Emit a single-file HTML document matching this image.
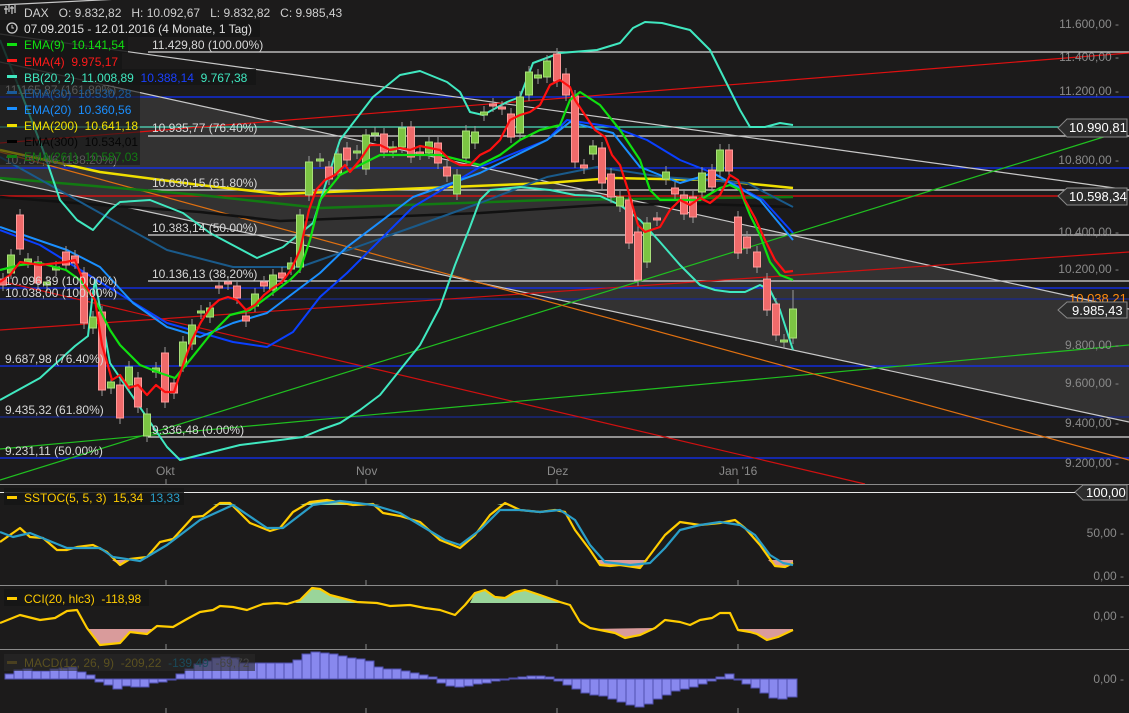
<!DOCTYPE html>
<html><head><meta charset="utf-8"><style>
html,body{margin:0;padding:0;background:#1c1b1b;}
svg{display:block;font-family:"Liberation Sans",sans-serif;}
text{white-space:pre;}
</style></head><body>
<svg width="1129" height="713" viewBox="0 0 1129 713" xmlns="http://www.w3.org/2000/svg">
<rect width="1129" height="713" fill="#1c1b1b"/>
<polygon points="0,62 1129,309 1129,422 0,180" fill="#333232"/>
<g stroke-width="1.2">
<line x1="148" y1="52" x2="1129" y2="52" stroke="#d8d8d8"/>
<line x1="0" y1="97" x2="1129" y2="97" stroke="#1030ff"/>
<line x1="0" y1="127" x2="1060" y2="127" stroke="#50e0c0"/>
<line x1="148" y1="136" x2="1129" y2="136" stroke="#d8d8d8"/>
<line x1="0" y1="168" x2="1129" y2="168" stroke="#1030ff"/>
<line x1="148" y1="190" x2="1129" y2="190" stroke="#d8d8d8"/>
<line x1="0" y1="196" x2="1060" y2="196" stroke="#ee1010"/>
<line x1="148" y1="235" x2="1129" y2="235" stroke="#d8d8d8"/>
<line x1="148" y1="281" x2="1129" y2="281" stroke="#d8d8d8"/>
<line x1="0" y1="288" x2="1129" y2="288" stroke="#1030ff"/>
<line x1="0" y1="299" x2="1129" y2="299" stroke="#1a2a90"/>
<line x1="0" y1="366" x2="1129" y2="366" stroke="#1030ff"/>
<line x1="0" y1="417" x2="1129" y2="417" stroke="#1a2a90"/>
<line x1="148" y1="437" x2="1129" y2="437" stroke="#d8d8d8"/>
<line x1="0" y1="458" x2="1129" y2="458" stroke="#1030ff"/>
</g>
<g stroke-width="1.2" fill="none">
<line x1="0" y1="34" x2="1129" y2="190" stroke="#c8c8c8"/>
<line x1="0" y1="5" x2="200" y2="-5" stroke="#c8c8c8"/>
<line x1="0" y1="62" x2="1129" y2="309" stroke="#c8c8c8"/>
<line x1="0" y1="180" x2="1129" y2="422" stroke="#c8c8c8"/>
<line x1="0" y1="143" x2="1129" y2="53" stroke="#e01010"/>
<line x1="0" y1="330" x2="1129" y2="252" stroke="#d01010"/>
<line x1="0" y1="281" x2="865" y2="484" stroke="#d01010"/>
<line x1="0" y1="480" x2="1110" y2="135" stroke="#20c020"/>
<line x1="0" y1="449" x2="1129" y2="345" stroke="#20c020"/>
<line x1="0" y1="152" x2="1129" y2="460" stroke="#e07010"/>
</g>
<g fill="none" stroke-linejoin="round">
<polyline stroke="#111" stroke-width="2.5" points="0,197 100,205 200,212 280,221 480,213 600,205 700,204 793,207"/>
<polyline stroke="#127a12" stroke-width="2.5" points="0,178 200,195 320,208 547,200 793,197"/>
<polyline stroke="#f0e000" stroke-width="2.5" points="0,150 100,172 200,185 280,194 547,183 613,178 713,180 793,188"/>
<polyline stroke="#1a5a8a" stroke-width="2" points="0,157 100,213 167,250 233,267 300,267 320,260 413,227 480,203 547,177 597,167 663,177 747,183 793,207"/>
<polyline stroke="#0a40ff" stroke-width="2" points="0,230 40,245 100,282 167,323 233,342 267,347 293,332 320,297 347,273 413,207 480,167 547,140 567,120 613,127 647,140 680,160 713,173 763,200 793,233"/>
<polyline stroke="#1a8fff" stroke-width="2" points="0,227 67,250 100,267 133,303 167,327 200,337 233,323 267,313 320,273 347,247 413,197 480,173 547,140 570,122 613,133 640,167 680,183 713,173 760,200 793,240"/>
<polyline stroke="#40e8c0" stroke-width="2" points="0,40 20,90 43,150 60,200 77,220 93,230 110,210 120,202 150,200 183,213 210,233 257,258 283,247 313,223 340,140 373,97 400,75 420,71 447,82 460,92 470,112 483,115 507,102 520,97 533,63 560,53 597,50 620,43 633,28 645,22 662,23 690,30 710,50 725,80 740,110 750,127 765,127 780,123 793,125"/>
<polyline stroke="#40e8c0" stroke-width="2" points="0,400 40,378 75,346 88,336 92,300 95,280 110,363 133,397 167,447 180,460 200,455 240,445 280,440 303,437 320,430 340,423 360,410 380,395 400,370 420,345 440,307 455,265 470,227 480,200 490,190 520,187 550,190 575,195 600,196 620,205 640,220 660,242 680,265 700,285 715,290 730,292 745,292 760,285 770,290 780,310 793,350"/>
</g>
<g stroke="#9a9a9a" stroke-width="1">
<path d="M3 273V291M11 249V279M20 209V255M28 253V268M38 256V289M47 276V291M56 261V276M66 246V271M75 250V269M84 267V329M93 311V334M102 306V396M111 376V394M120 379V424M129 361V391M138 372V413M147 408V442M156 362V378M165 347V408M174 377V399M183 336V372M192 319V350M201 305V319M210 302V323M219 280V294M228 276V290M237 280V304M246 310V327M255 288V312M264 276V292M273 269V296M282 267V284M291 257V275M300 209V273M309 156V201M320 153V167M329 161V185M338 148V179M347 142V166M357 145V159M366 129V175M375 127V141M384 128V158M393 141V158M402 122V153M411 121V163M420 146V160M429 136V159M438 137V169M447 161V182M457 169V200M466 125V164M475 126V149M484 106V121M493 98V112M502 101V115M511 108V143M520 91V139M529 66V101M538 69V84M547 55V83M557 48V87M566 68V101M575 90V168M584 159V174M593 140V160M602 142V189M611 168V203M620 191V212M629 194V249M638 226V286M647 217V268M657 212V226M666 166V185M675 182V200M684 189V220M693 191V223M702 167V198M712 164V193M720 144V177M729 144V177M738 211V259M747 231V254M757 246V273M767 273V316M776 298V341M784 334V348M793 290V344"/>
</g>
<g stroke-width="1">
<g fill="#7cc443" stroke="#a8e07a">
<rect x="7.5" y="255" width="7" height="18"/><rect x="24.5" y="259" width="7" height="3"/><rect x="43.5" y="282" width="7" height="3"/><rect x="52.5" y="267" width="7" height="3"/><rect x="89.5" y="317" width="7" height="11"/><rect x="107.5" y="382" width="7" height="6"/><rect x="125.5" y="367" width="7" height="18"/><rect x="143.5" y="414" width="7" height="22"/><rect x="152.5" y="368" width="7" height="4"/><rect x="179.5" y="342" width="7" height="24"/><rect x="188.5" y="325" width="7" height="19"/><rect x="197.5" y="311" width="7" height="2"/><rect x="206.5" y="308" width="7" height="9"/><rect x="251.5" y="294" width="7" height="12"/><rect x="269.5" y="275" width="7" height="15"/><rect x="287.5" y="263" width="7" height="6"/><rect x="296.5" y="215" width="7" height="52"/><rect x="305.5" y="162" width="7" height="33"/><rect x="316.5" y="159" width="7" height="2"/><rect x="334.5" y="154" width="7" height="19"/><rect x="353.5" y="151" width="7" height="2"/><rect x="362.5" y="135" width="7" height="34"/><rect x="371.5" y="133" width="7" height="2"/><rect x="389.5" y="147" width="7" height="5"/><rect x="398.5" y="128" width="7" height="19"/><rect x="425.5" y="142" width="7" height="11"/><rect x="453.5" y="175" width="7" height="19"/><rect x="462.5" y="131" width="7" height="27"/><rect x="471.5" y="132" width="7" height="11"/><rect x="480.5" y="112" width="7" height="3"/><rect x="516.5" y="97" width="7" height="36"/><rect x="525.5" y="72" width="7" height="23"/><rect x="534.5" y="75" width="7" height="3"/><rect x="543.5" y="61" width="7" height="16"/><rect x="589.5" y="146" width="7" height="8"/><rect x="616.5" y="197" width="7" height="9"/><rect x="643.5" y="223" width="7" height="39"/><rect x="662.5" y="172" width="7" height="7"/><rect x="698.5" y="173" width="7" height="19"/><rect x="716.5" y="150" width="7" height="21"/><rect x="780.5" y="340" width="7" height="2"/><rect x="789.5" y="309" width="7" height="29"/>
</g>
<g fill="#f06a6a" stroke="#ff9a9a">
<rect x="-0.5" y="279" width="7" height="6"/><rect x="16.5" y="215" width="7" height="34"/><rect x="34.5" y="262" width="7" height="21"/><rect x="62.5" y="252" width="7" height="13"/><rect x="71.5" y="256" width="7" height="7"/><rect x="80.5" y="273" width="7" height="50"/><rect x="98.5" y="312" width="7" height="78"/><rect x="116.5" y="385" width="7" height="33"/><rect x="134.5" y="378" width="7" height="29"/><rect x="161.5" y="353" width="7" height="49"/><rect x="170.5" y="383" width="7" height="10"/><rect x="215.5" y="286" width="7" height="2"/><rect x="224.5" y="282" width="7" height="2"/><rect x="233.5" y="286" width="7" height="12"/><rect x="242.5" y="316" width="7" height="5"/><rect x="260.5" y="282" width="7" height="4"/><rect x="278.5" y="273" width="7" height="5"/><rect x="325.5" y="167" width="7" height="12"/><rect x="343.5" y="148" width="7" height="12"/><rect x="380.5" y="134" width="7" height="18"/><rect x="407.5" y="127" width="7" height="30"/><rect x="416.5" y="152" width="7" height="2"/><rect x="434.5" y="143" width="7" height="20"/><rect x="443.5" y="167" width="7" height="9"/><rect x="489.5" y="104" width="7" height="2"/><rect x="498.5" y="107" width="7" height="2"/><rect x="507.5" y="114" width="7" height="23"/><rect x="553.5" y="54" width="7" height="27"/><rect x="562.5" y="74" width="7" height="21"/><rect x="571.5" y="96" width="7" height="66"/><rect x="580.5" y="165" width="7" height="3"/><rect x="598.5" y="148" width="7" height="35"/><rect x="607.5" y="174" width="7" height="23"/><rect x="625.5" y="200" width="7" height="43"/><rect x="634.5" y="232" width="7" height="48"/><rect x="653.5" y="218" width="7" height="2"/><rect x="671.5" y="188" width="7" height="6"/><rect x="680.5" y="195" width="7" height="19"/><rect x="689.5" y="197" width="7" height="20"/><rect x="708.5" y="170" width="7" height="17"/><rect x="725.5" y="150" width="7" height="21"/><rect x="734.5" y="217" width="7" height="36"/><rect x="743.5" y="237" width="7" height="11"/><rect x="753.5" y="252" width="7" height="15"/><rect x="763.5" y="279" width="7" height="31"/><rect x="772.5" y="304" width="7" height="31"/>
</g>
</g>
<g fill="none" stroke-width="2.2" stroke-linejoin="round">
<polyline stroke="#10e010" points="0,270 20,265 40,263 66,270 80,280 95,300 110,330 120,345 140,365 160,373 175,378 190,360 210,335 230,315 250,310 270,295 290,280 300,270 310,240 320,200 340,175 360,165 380,155 420,155 440,155 460,160 480,165 500,155 520,140 540,130 560,125 570,100 580,92 600,105 620,130 640,160 650,190 660,200 680,200 700,200 720,188 730,185 740,190 750,215 760,235 770,262 780,275 793,280"/>
<polyline stroke="#ff1010" points="0,282 10,275 20,262 40,265 66,262 75,260 85,285 95,300 102,345 112,380 120,375 129,388 138,385 147,395 156,385 165,392 174,392 183,365 192,340 201,322 210,308 219,300 228,297 237,300 246,310 255,305 264,295 273,288 282,282 291,270 300,250 309,210 316,190 325,180 335,175 345,165 350,172 360,160 370,145 380,145 390,150 400,148 410,150 420,146 430,148 440,150 450,160 460,165 470,165 480,155 490,150 500,140 510,120 520,115 530,112 540,105 550,85 560,80 570,87 575,100 585,115 595,130 605,137 612,155 620,165 628,190 638,225 645,232 660,227 670,210 680,200 690,205 700,198 710,203 720,195 730,175 738,180 745,200 755,218 765,240 775,260 785,272 793,271"/>
</g>
<g font-size="12" fill="#d8d8d8">
<text x="152" y="49">11.429,80 (100.00%)</text>
<text x="152" y="132">10.935,77 (76.40%)</text>
<text x="152" y="187">10.630,15 (61.80%)</text>
<text x="152" y="232">10.383,14 (50.00%)</text>
<text x="152" y="278">10.136,13 (38.20%)</text>
<text x="152" y="434">9.336,48 (0.00%)</text>
<text x="5" y="94" fill="#bbb">11.165,87 (161.80%)</text>
<text x="5" y="164" fill="#bbb">10.757,46 (138.20%)</text>
<text x="5" y="285">10.096,39 (100.00%)</text>
<text x="5" y="297">10.038,00 (100.00%)</text>
<text x="5" y="363">9.687,98 (76.40%)</text>
<text x="5" y="414">9.435,32 (61.80%)</text>
<text x="5" y="455">9.231,11 (50.00%)</text>
</g>
<g font-size="12">
<rect x="0" y="20" width="260" height="17" fill="#151515" opacity="0.85"/>
<rect x="0" y="37" width="128" height="16" fill="#151515" opacity="0.85"/>
<rect x="0" y="53" width="122" height="16" fill="#151515" opacity="0.85"/>
<rect x="0" y="69" width="256" height="16" fill="#151515" opacity="0.85"/>
<rect x="0" y="85" width="140" height="80" fill="#151515" opacity="0.6"/>
<path d="M6 6V14M9 4V12M12 6V14M15 5V13M4 9H8M10 8H14" stroke="#ccc" stroke-width="1.2"/>
<text x="24" y="17" fill="#cfcfcf">DAX   O: 9.832,82   H: 10.092,67   L: 9.832,82   C: 9.985,43</text>
<circle cx="12" cy="28" r="5" fill="none" stroke="#ccc" stroke-width="1.3"/><path d="M12 25V28H14" stroke="#ccc" fill="none"/>
<text x="24" y="33" fill="#e0e0e0">07.09.2015 - 12.01.2016 (4 Monate, 1 Tag)</text>
<rect x="7" y="43" width="10" height="3" fill="#10e010"/><text x="24" y="49" fill="#10e010">EMA(9)  10.141,54</text>
<rect x="7" y="59" width="10" height="3" fill="#ff1a1a"/><text x="24" y="66" fill="#ff1a1a">EMA(4)  9.975,17</text>
<rect x="7" y="75" width="10" height="3" fill="#40e8c0"/><text x="24" y="82" fill="#40e8c0">BB(20, 2)  11.008,89  <tspan fill="#1a40ff">10.388,14</tspan>  9.767,38</text>
<rect x="7" y="91" width="10" height="3" fill="#1a5a9a"/><text x="24" y="98" fill="#1a5a9a">EMA(30)  10.530,28</text>
<rect x="7" y="107" width="10" height="3" fill="#1a8fff"/><text x="24" y="114" fill="#1a8fff">EMA(20)  10.360,56</text>
<rect x="7" y="124" width="10" height="3" fill="#f0e000"/><text x="24" y="130" fill="#f0e000">EMA(200)  10.641,18</text>
<rect x="7" y="140" width="10" height="3" fill="#000"/><text x="24" y="146" fill="#050505">EMA(300)  10.534,01</text>
<rect x="7" y="155" width="10" height="3" fill="#127a12"/><text x="24" y="161" fill="#127a12">EMA(261)  10.587,03</text>
</g>
<g font-size="12" fill="#8a8a8a" text-anchor="end">
<text x="1119" y="28">11.600,00 -</text>
<text x="1119" y="61">11.400,00 -</text>
<text x="1119" y="95">11.200,00 -</text>
<text x="1119" y="164">10.800,00 -</text>
<text x="1119" y="236">10.400,00 -</text>
<text x="1119" y="273">10.200,00 -</text>
<text x="1119" y="349">9.800,00 -</text>
<text x="1119" y="387">9.600,00 -</text>
<text x="1119" y="427">9.400,00 -</text>
<text x="1119" y="467">9.200,00 -</text>
<text x="1124" y="537">50,00 -</text>
<text x="1124" y="580">0,00 -</text>
<text x="1124" y="620">0,00 -</text>
<text x="1124" y="683">0,00 -</text>
</g>
<g font-size="13" fill="#fff">
<path d="M1058 128L1067 119H1127V137H1067Z" fill="#2c2c2c" stroke="#888"/><text x="1069" y="132">10.990,81</text>
<path d="M1058 196L1067 188H1127V205H1067Z" fill="#2c2c2c" stroke="#888"/><text x="1069" y="201">10.598,34</text>
<text x="1069" y="303" fill="#ff8a10">10.038,21</text>
<path d="M1058 310L1067 302H1127V318H1067Z" fill="#2c2c2c" stroke="#888"/><text x="1072" y="315">9.985,43</text>
<path d="M1075 492L1083 485H1127V500H1083Z" fill="#2c2c2c" stroke="#888"/><text x="1086" y="497">100,00</text>
</g>
<g font-size="12" fill="#8a8a8a">
<text x="156" y="475">Okt</text><text x="356" y="475">Nov</text><text x="547" y="475">Dez</text><text x="719" y="475">Jan '16</text>
</g>
<g stroke="#888"><path d="M166 479V484M366 479V484M557 479V484M738 479V484M166 580V585M366 580V585M557 580V585M738 580V585M166 644V649M366 644V649M557 644V649M738 644V649M166 708V713M366 708V713M557 708V713M738 708V713"/></g>
<line x1="0" y1="484.5" x2="1129" y2="484.5" stroke="#8a8a8a"/>
<line x1="0" y1="585.5" x2="1129" y2="585.5" stroke="#8a8a8a"/>
<line x1="0" y1="649.5" x2="1129" y2="649.5" stroke="#8a8a8a"/>
<line x1="0" y1="492.5" x2="1075" y2="492.5" stroke="#e8e8e8"/>
<g opacity="0.9">
<polygon points="213,505 220,503 230,503 236,505" fill="#a8eaa8"/>
<polygon points="300,505 310,502 327,500 353,505 373,504 380,505" fill="#a8eaa8"/>
<polygon points="497,505 505,503 512,505" fill="#a8eaa8"/>
<polygon points="112,560 120,565 126,560" fill="#eeaaaa"/>
<polygon points="596,560 600,565 610,566 620,565 640,568 648,560" fill="#eeaaaa"/>
<polygon points="768,560 775,566 785,567 793,563 793,560" fill="#eeaaaa"/>
</g>
<g fill="none" stroke-width="2.2" stroke-linejoin="round">
<polyline stroke="#ffcc00" points="0,542 20,528 30,537 43,538 57,550 67,550 77,547 93,545 107,552 120,565 130,559 147,557 160,542 173,539 193,517 203,516 220,503 230,503 250,523 270,531 280,528 293,512 310,502 327,500 353,505 373,504 383,513 400,516 420,522 440,540 460,548 475,535 490,515 505,503 520,510 540,512 555,510 565,512 575,530 590,550 600,565 610,566 620,565 640,568 650,555 665,535 680,522 700,525 720,523 735,520 745,528 760,545 775,566 785,567 793,563"/>
<polyline stroke="#2a9ec8" points="0,532 13,537 30,533 67,548 100,548 113,557 140,561 167,545 200,520 233,505 267,528 283,528 313,505 340,501 373,505 400,513 420,525 445,540 460,545 480,530 500,510 520,510 540,512 560,510 575,520 590,545 605,562 630,565 650,563 665,548 680,530 700,525 720,522 740,525 755,535 770,555 783,563 793,565"/>
</g>
<g opacity="0.9">
<polygon points="87,629 100,645 120,643 130,632 147,634 152,629" fill="#eeaaaa"/>
<polygon points="295,603 300,600 312,588 320,589 330,595 357,602 360,603" fill="#a8eaa8"/>
<polygon points="470,603 475,593 485,590 495,597 505,598 515,592 525,590 540,595 560,602 562,603" fill="#a8eaa8"/>
<polygon points="589,629 600,630 615,633 625,638 640,635 655,628" fill="#eeaaaa"/>
<polygon points="737,629 745,631 755,633 765,640 780,637 793,630 793,629" fill="#eeaaaa"/>
</g>
<polyline fill="none" stroke="#ffcc00" stroke-width="2.2" stroke-linejoin="round" points="0,623 20,615 40,620 55,618 67,611 77,610 87,628 100,645 120,643 130,632 147,634 157,626 173,627 187,619 200,612 213,610 220,606 233,607 247,610 263,604 277,603 287,604 300,600 312,588 320,589 330,595 357,602 377,603 390,606 410,605 425,608 440,610 455,615 465,605 475,593 485,590 495,597 505,598 515,592 525,590 540,595 560,602 570,605 580,622 590,628 600,630 615,633 625,638 640,635 655,628 665,620 680,622 690,625 700,620 712,618 720,613 730,613 738,630 750,632 757,634 767,640 778,637 793,630"/>
<g fill="#8888ee" stroke="#5050b0" stroke-width="1">
<rect x="5" y="674" width="9" height="5"/><rect x="14" y="670" width="9" height="9"/><rect x="23" y="669" width="9" height="10"/><rect x="32" y="671" width="9" height="8"/><rect x="41" y="671" width="9" height="8"/><rect x="50" y="669" width="9" height="10"/><rect x="59" y="668" width="9" height="11"/><rect x="68" y="667" width="9" height="12"/><rect x="77" y="672" width="9" height="7"/><rect x="86" y="675" width="9" height="4"/>
<rect x="95" y="679" width="9" height="3"/><rect x="104" y="679" width="9" height="6"/><rect x="113" y="679" width="9" height="10"/><rect x="122" y="679" width="9" height="7"/><rect x="131" y="679" width="9" height="8"/><rect x="140" y="679" width="9" height="8"/><rect x="149" y="679" width="9" height="4"/><rect x="158" y="679" width="9" height="3"/><rect x="167" y="679" width="9" height="1"/>
<rect x="176" y="674" width="9" height="5"/><rect x="185" y="669" width="9" height="10"/><rect x="194" y="664" width="9" height="15"/><rect x="203" y="661" width="9" height="18"/><rect x="212" y="658" width="9" height="21"/><rect x="221" y="657" width="9" height="22"/><rect x="230" y="658" width="9" height="21"/><rect x="239" y="663" width="9" height="16"/><rect x="248" y="663" width="9" height="16"/><rect x="257" y="663" width="9" height="16"/><rect x="266" y="663" width="9" height="16"/><rect x="275" y="663" width="9" height="16"/><rect x="284" y="663" width="9" height="16"/><rect x="293" y="660" width="9" height="19"/><rect x="302" y="654" width="9" height="25"/><rect x="311" y="652" width="9" height="27"/><rect x="320" y="653" width="9" height="26"/><rect x="329" y="654" width="9" height="25"/><rect x="338" y="656" width="9" height="23"/><rect x="347" y="658" width="9" height="21"/><rect x="356" y="659" width="9" height="20"/><rect x="365" y="661" width="9" height="18"/><rect x="374" y="667" width="9" height="12"/><rect x="383" y="669" width="9" height="10"/><rect x="392" y="669" width="9" height="10"/><rect x="401" y="671" width="9" height="8"/><rect x="410" y="673" width="9" height="6"/><rect x="419" y="675" width="9" height="4"/><rect x="428" y="677" width="9" height="2"/>
<rect x="437" y="679" width="9" height="4"/><rect x="446" y="679" width="9" height="7"/><rect x="455" y="679" width="9" height="8"/><rect x="464" y="679" width="9" height="7"/><rect x="473" y="679" width="9" height="5"/><rect x="482" y="679" width="9" height="4"/><rect x="491" y="679" width="9" height="2"/><rect x="500" y="679" width="9" height="1"/>
<rect x="509" y="678" width="9" height="1"/><rect x="518" y="677" width="9" height="2"/><rect x="527" y="676" width="9" height="3"/><rect x="536" y="676" width="9" height="3"/><rect x="545" y="677" width="9" height="2"/>
<rect x="554" y="679" width="9" height="2"/><rect x="563" y="679" width="9" height="6"/><rect x="572" y="679" width="9" height="10"/><rect x="581" y="679" width="9" height="14"/><rect x="590" y="679" width="9" height="16"/><rect x="599" y="679" width="9" height="17"/><rect x="608" y="679" width="9" height="20"/><rect x="617" y="679" width="9" height="23"/><rect x="626" y="679" width="9" height="26"/><rect x="635" y="679" width="9" height="28"/><rect x="644" y="679" width="9" height="25"/><rect x="653" y="679" width="9" height="20"/><rect x="662" y="679" width="9" height="16"/><rect x="671" y="679" width="9" height="12"/><rect x="680" y="679" width="9" height="10"/><rect x="689" y="679" width="9" height="8"/><rect x="698" y="679" width="9" height="5"/><rect x="707" y="679" width="9" height="2"/>
<rect x="716" y="677" width="9" height="2"/><rect x="725" y="674" width="9" height="5"/><rect x="734" y="679" width="9" height="1"/>
<rect x="742" y="679" width="9" height="5"/><rect x="751" y="679" width="9" height="9"/><rect x="760" y="679" width="9" height="14"/><rect x="769" y="679" width="9" height="19"/><rect x="778" y="679" width="9" height="20"/><rect x="787" y="679" width="10" height="18"/>
</g>
<g font-size="12">
<rect x="4" y="488" width="180" height="17" fill="#151515" opacity="0.85"/>
<rect x="7" y="496" width="10" height="3" fill="#ffcc00"/>
<text x="24" y="502" fill="#ffcc00">SSTOC(5, 5, 3)  15,34  <tspan fill="#2a9ec8">13,33</tspan></text>
<rect x="4" y="589" width="145" height="17" fill="#151515" opacity="0.85"/>
<rect x="7" y="597" width="10" height="3" fill="#ffcc00"/>
<text x="24" y="603" fill="#ffcc00">CCI(20, hlc3)  -118,98</text>
<rect x="4" y="654" width="251" height="17" fill="#2a2a2a" opacity="0.6"/>
<rect x="7" y="661" width="10" height="3" fill="#4a4020"/>
<text x="24" y="667" fill="#5a5020">MACD(12, 26, 9)  -209,22  <tspan fill="#1a4a5a">-139,49</tspan>  <tspan fill="#444">-69,72</tspan></text>
</g>
</svg>
</body></html>
